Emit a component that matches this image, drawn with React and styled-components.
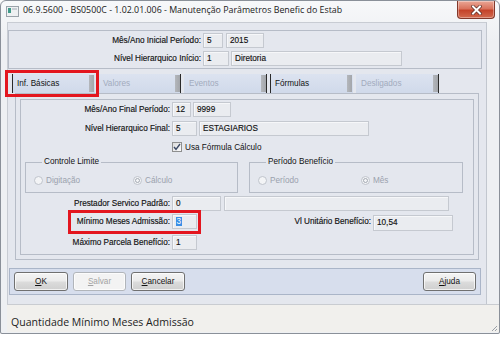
import React from 'react'
import styled, { createGlobalStyle } from 'styled-components'

let Global = createGlobalStyle`
  * {
    margin: 0;
    padding: 0;
    box-sizing: border-box;
  }
  body {
    background: #fff;
    font-family: "Liberation Sans", Arial, sans-serif;
    color: #141414;
  }
`

let UI_FONT = '"Liberation Sans", Arial, sans-serif'
let TITLE_FONT = '"Open Sans", "Liberation Sans", sans-serif'
let CLIENT_BG = '#e4e7ee'
let FIELD_BG = '#eaecf0'
let LINE = '#b6bcc7'
let RED = '#e3161f'
let TEXT = '#121212'

let Window = styled.div`
  width: 500px;
  height: 334px;
  border: 1px solid #8a9099;
  border-radius: 6px 6px 2px 2px;
  background: linear-gradient(#f7f8fa, #eef0f3 40px, #eef0f3);
  display: flex;
  flex-direction: column;
  box-shadow: 0 2px 4px rgba(0, 0, 0, 0.25);
  overflow: hidden;
`

let TitleBar = styled.div`
  height: 21px;
  flex-shrink: 0;
  display: flex;
  align-items: flex-start;
  padding-left: 5px;
`

let AppIcon = styled.svg`
  margin-top: 5px;
  flex-shrink: 0;
`

let Title = styled.div`
  margin-left: 4px;
  margin-top: 3px;
  font-family: ${TITLE_FONT};
  font-size: 8.85px;
  line-height: 13px;
  color: #1a1a1a;
  white-space: nowrap;
`

let CloseButton = styled.div`
  margin-left: auto;
  margin-right: 4px;
  width: 38px;
  height: 18px;
  border: 1px solid #82382b;
  border-top: none;
  border-radius: 0 0 4px 4px;
  background: linear-gradient(#eaa796, #d9735d 45%, #c4432a 55%, #d26a4f);
  display: flex;
  align-items: center;
  justify-content: center;
  box-shadow: inset 0 0 0 1px rgba(255, 255, 255, 0.35);
`

let Frame = styled.div`
  flex: 1;
  display: flex;
  flex-direction: column;
  padding: 0 0 1px 6px;
`

let Client = styled.div`
  height: 282px;
  margin-right: 12px;
  background: ${CLIENT_BG};
  border-left: 1px solid #c8ccd3;
  border-right: 1px solid #c2c7cf;
  border-top: 1px solid #c8ccd3;
  display: flex;
  flex-direction: column;
`

let Panel = styled.div`
  margin: 7px 4px 0 0;
  border: 1px solid ${LINE};
  padding: 2px 0;
  display: flex;
  flex-direction: column;
  gap: 3px;
`

let Row = styled.div`
  position: relative;
  display: flex;
  align-items: center;
  height: ${p => p.$h || 15}px;
  margin-top: ${p => p.$top || 0}px;
`

let Label = styled.div`
  width: ${p => p.$w}px;
  text-align: right;
  font-size: 8.2px;
  white-space: nowrap;
  padding-right: 2px;
  color: ${p => (p.$muted ? '#9aa1ad' : TEXT)};
  -webkit-text-stroke: 0.15px ${TEXT};
  flex-shrink: 0;
`

let Field = styled.div`
  width: ${p => p.$w}px;
  height: ${p => p.$h || 15}px;
  margin-left: ${p => p.$gap || 0}px;
  margin-top: ${p => p.$dy || 0}px;
  background: ${FIELD_BG};
  border: 1px solid #c5c9d0;
  box-shadow: inset 1px 1px 0 #f6f7f9;
  font-size: 8.2px;
  line-height: 13px;
  padding-left: 3px;
  white-space: nowrap;
  overflow: hidden;
  flex-shrink: 0;
  color: ${TEXT};
  -webkit-text-stroke: 0.15px ${TEXT};
`

let Selected = styled.span`
  background: #3a8ee6;
  color: #fff;
  -webkit-text-stroke: 0;
  padding: 0 0.5px;
`

let Tabs = styled.div`
  position: relative;
  display: flex;
  gap: 3px;
  margin-top: 5px;
  padding-left: 4px;
  height: 19px;
`

let Tab = styled.div`
  position: relative;
  width: 83px;
  height: 19px;
  background: linear-gradient(#dce3f0, #d0d9ea);
  border-left: 1px solid ${p => (p.$active ? '#2a2a2a' : 'transparent')};
  border-right: 1px solid ${p => (p.$active ? 'transparent' : '#2a2a2a')};
  font-size: 8.2px;
  line-height: 19px;
  padding-left: 4px;
  color: ${p => (p.$disabled ? '#a2abbd' : TEXT)};
  &::after {
    content: '';
    position: absolute;
    right: 0;
    top: 1px;
    bottom: 1px;
    width: 5px;
    background: linear-gradient(90deg, #b4b7bc, #a3a6ab);
  }
`

let RedBox = styled.div`
  position: absolute;
  left: ${p => p.$x}px;
  top: ${p => p.$y}px;
  width: ${p => p.$w}px;
  height: ${p => p.$h}px;
  border: 3px solid ${RED};
  pointer-events: none;
`

let TabOuter = styled.div`
  margin-left: 7px;
  width: 464px;
  height: 167px;
  border: 1px solid ${LINE};
  padding: 5px 4px 4px 4px;
`

let TabInner = styled.div`
  height: 100%;
  border: 1px solid ${LINE};
  padding-top: 2px;
  display: flex;
  flex-direction: column;
`

let CheckWrap = styled.label`
  display: flex;
  align-items: center;
  gap: 3px;
  font-size: 8.2px;
  margin-left: 151px;
  color: ${TEXT};
`

let Box = styled.span`
  width: 10px;
  height: 10px;
  border: 1px solid #8e8f8f;
  background: linear-gradient(135deg, #dcdcdc, #fbfbfb);
  display: flex;
  align-items: center;
  justify-content: center;
`

let Groups = styled.div`
  display: flex;
  gap: 11px;
  margin-top: 4px;
  margin-left: 4px;
`

let Group = styled.fieldset`
  width: ${p => p.$w}px;
  height: 36px;
  border: 1px solid ${LINE};
  padding: 0 0 0 8px;
  display: grid;
  grid-template-columns: ${p => p.$split}px 1fr;
  align-items: center;
  legend {
    margin-left: 8px;
    padding: 0 2px;
    font-size: 8.2px;
    line-height: 10px;
    color: ${TEXT};
  }
`

let Radio = styled.div`
  display: flex;
  align-items: center;
  gap: 3px;
  font-size: 8.2px;
  color: #9aa1ad;
  margin-top: 2px;
`

let Dot = styled.span`
  width: 9px;
  height: 9px;
  border-radius: 50%;
  border: 1px solid #bfc4cc;
  background: #f3f4f6;
  display: flex;
  align-items: center;
  justify-content: center;
  &::after {
    content: '';
    width: 3px;
    height: 3px;
    border-radius: 50%;
    border: 1px solid #a4aab3;
    display: ${p => (p.$on ? 'block' : 'none')};
  }
`

let ButtonBar = styled.div`
  margin: 8px 5px 0 1px;
  height: 27px;
  background: #d7deed;
  border: 1px solid #aab5c8;
  padding: 3px 4px 0 4px;
  display: flex;
  gap: 5px;
`

let Button = styled.div`
  width: ${p => p.$w || 53}px;
  height: 19px;
  margin-left: ${p => (p.$right ? 'auto' : 0)};
  border: 1px solid ${p => (p.$disabled ? '#b1b5ba' : '#707070')};
  border-radius: 3px;
  background: ${p =>
    p.$disabled
      ? '#f3f3f3'
      : 'linear-gradient(#f4f4f4, #ebebeb 48%, #dcdcdc 52%, #cfcfcf)'};
  box-shadow: inset 0 0 0 1px rgba(255, 255, 255, 0.7);
  color: ${p => (p.$disabled ? '#a3a3a3' : TEXT)};
  font-family: ${UI_FONT};
  font-size: 8.2px;
  line-height: 17px;
  text-align: center;
  u {
    text-decoration: underline;
  }
`

let StatusBar = styled.div`
  flex: 1;
  background: #f1f0ed;
  border-top: 1px solid #c9ccd1;
  font-family: ${TITLE_FONT};
  font-size: 10.55px;
  padding: 10px 0 0 4px;
  color: #1c1c1c;
  position: relative;
`

let Grip = styled.svg`
  position: absolute;
  right: 1px;
  bottom: 0px;
`

function Check () {
  return (
    <svg width="8" height="8" viewBox="0 0 8 8">
      <path d="M1 4 L3 6.3 L7 1" fill="none" stroke="#3c4a66" strokeWidth="1.4" />
    </svg>
  )
}

export default function App () {
  return (
    <>
      <Global />
      <Window>
        <TitleBar>
          <AppIcon width="13" height="11" viewBox="0 0 13 11">
            <rect x="0.5" y="0.5" width="12" height="10" fill="#eef0f2" stroke="#9aa2aa" />
            <rect x="2" y="2" width="3" height="5" fill="#3f9a8a" />
            <rect x="6" y="2" width="5" height="2" fill="#c8cdd3" />
          </AppIcon>
          <Title>06.9.5600 - BS0500C - 1.02.01.006 - Manutenção Parâmetros Benefic do Estab</Title>
          <CloseButton>
            <svg width="11" height="10" viewBox="0 0 11 10">
              <path d="M2 1.5 L9 8.5 M9 1.5 L2 8.5" stroke="#5a2a22" strokeWidth="3.4" strokeLinecap="square" />
              <path d="M2 1.5 L9 8.5 M9 1.5 L2 8.5" stroke="#fff" strokeWidth="2" strokeLinecap="square" />
            </svg>
          </CloseButton>
        </TitleBar>
        <Frame>
          <Client>
            <Panel>
              <Row>
                <Label $w={194}>Mês/Ano Inicial Período:</Label>
                <Field $w={20}>5</Field>
                <Field $w={38} $gap={3}>2015</Field>
              </Row>
              <Row>
                <Label $w={194}>Nível Hierarquico Início:</Label>
                <Field $w={26}>1</Field>
                <Field $w={171} $gap={2}>Diretoria</Field>
              </Row>
            </Panel>

            <Tabs>
              <Tab $active>Inf. Básicas</Tab>
              <Tab $disabled>Valores</Tab>
              <Tab $disabled>Eventos</Tab>
              <Tab $active>Fórmulas</Tab>
              <Tab $disabled>Desligados</Tab>
              <RedBox $x={-3} $y={-4} $w={94} $h={27} />
            </Tabs>

            <TabOuter>
              <TabInner>
                <Row>
                  <Label $w={151}>Mês/Ano Final Período:</Label>
                  <Field $w={19}>12</Field>
                  <Field $w={38} $gap={2}>9999</Field>
                </Row>
                <Row $top={4}>
                  <Label $w={151}>Nível Hierarquico Final:</Label>
                  <Field $w={25}>5</Field>
                  <Field $w={170} $gap={2}>ESTAGIARIOS</Field>
                </Row>
                <Row $top={5} $h={12}>
                  <CheckWrap>
                    <Box><Check /></Box>
                    Usa Fórmula Cálculo
                  </CheckWrap>
                </Row>
                <Groups>
                  <Group $w={213} $split={99}>
                    <legend>Controle Limite</legend>
                    <Radio><Dot />Digitação</Radio>
                    <Radio><Dot $on />Cálculo</Radio>
                  </Group>
                  <Group $w={214} $split={103}>
                    <legend>Período Benefício</legend>
                    <Radio><Dot />Período</Radio>
                    <Radio><Dot $on />Mês</Radio>
                  </Group>
                </Groups>
                <Row $top={3}>
                  <Label $w={151}>Prestador Servico Padrão:</Label>
                  <Field $w={49}>0</Field>
                  <Field $w={225} $gap={3}></Field>
                </Row>
                <Row $top={3}>
                  <Label $w={151}>Mínimo Meses Admissão:</Label>
                  <Field $w={25}><Selected>3</Selected></Field>
                  <Label $w={176}>Vl Unitário Benefício:</Label>
                  <Field $w={80} $h={16} $dy={2}>10,54</Field>
                  <RedBox $x={47} $y={-4} $w={133} $h={24} />
                </Row>
                <Row $top={6}>
                  <Label $w={151}>Máximo Parcela Benefício:</Label>
                  <Field $w={25}>1</Field>
                </Row>
              </TabInner>
            </TabOuter>

            <ButtonBar>
              <Button $w={54}><u>O</u>K</Button>
              <Button $w={53} $disabled><u>S</u>alvar</Button>
              <Button $w={54}><u>C</u>ancelar</Button>
              <Button $w={53} $right><u>A</u>juda</Button>
            </ButtonBar>
          </Client>
          <StatusBar>
            Quantidade Mínimo Meses Admissão
            <Grip width="8" height="8" viewBox="0 0 8 8">
              <path d="M7 2 L2 7 M7 5 L5 7" stroke="#9aa0a8" strokeWidth="1" />
            </Grip>
          </StatusBar>
        </Frame>
      </Window>
    </>
  )
}
